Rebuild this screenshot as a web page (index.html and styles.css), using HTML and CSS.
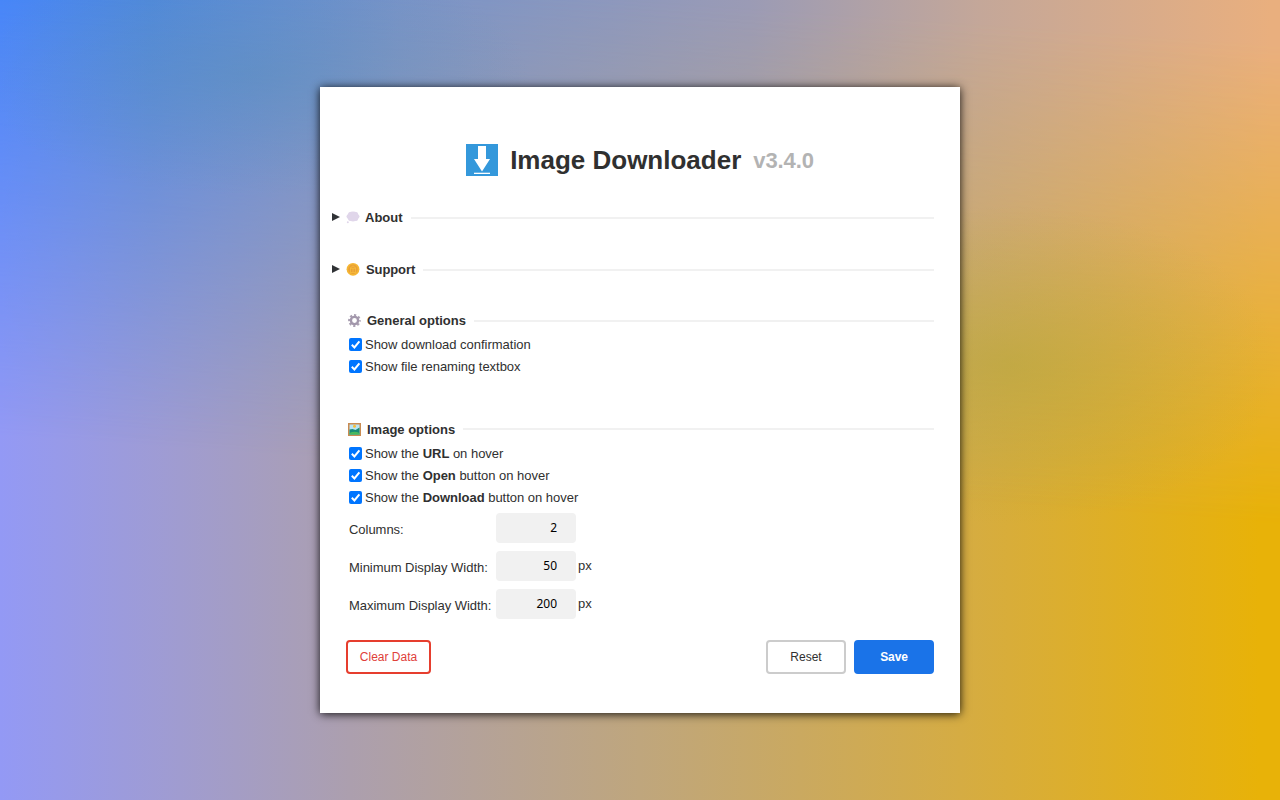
FILE: index.html
```html
<!DOCTYPE html>
<html lang="en">
<head>
<meta charset="utf-8">
<title>Image Downloader</title>
<link rel="stylesheet" href="styles.css">
</head>
<body>
<main class="card">
  <header class="header">
    <svg class="logo" viewBox="0 0 32 32"><rect width="32" height="32" fill="#3498db"/><path d="M12 2h8v13h4l-8 12.500l-8-12.500h4z" fill="#fff"/><path d="M8 28.700h16v1.300H8z" fill="#fff"/></svg>
    <h1 class="title">Image Downloader</h1>
    <span class="version">v3.4.0</span>
  </header>

  <section class="section about">
    <h2 class="heading collapsible">
      <svg class="marker" viewBox="0 0 8 8"><path d="M0 0l8 4l-8 4z"/></svg>
      <svg class="icon" viewBox="0 0 14 14"><g fill="#e0d6ea"><ellipse cx="7" cy="6.500" rx="5.800" ry="5"/><circle cx="2.500" cy="6.500" r="2"/><circle cx="11.500" cy="6.500" r="2"/><circle cx="4.200" cy="4" r="2"/><circle cx="10" cy="4" r="2"/><circle cx="4.200" cy="9" r="2"/><circle cx="10" cy="9" r="2"/><circle cx="1.800" cy="12.300" r="1"/></g></svg>
      <span>About</span>
    </h2>
  </section>

  <section class="section support">
    <h2 class="heading collapsible">
      <svg class="marker" viewBox="0 0 8 8"><path d="M0 0l8 4l-8 4z"/></svg>
      <svg class="icon coin" viewBox="0 0 14 14"><circle cx="7" cy="7.300" r="6.400" fill="#f5b634"/><circle cx="7" cy="7.300" r="4.700" fill="#e9a035"/><path d="M4 6.300l3-2.500l3 2.500zM4.500 6.300v4M7 6.300v4M9.500 6.300v4M4 10.500h6" stroke="#f6bc3c" stroke-width=".8" fill="none"/></svg>
      <span>Support</span>
    </h2>
  </section>

  <section class="section general">
    <h2 class="heading">
      <svg class="icon" viewBox="0 0 14 14"><circle cx="7.500" cy="7.500" r="5.400" fill="none" stroke="#aaa0b2" stroke-width="2" stroke-dasharray="2.200 2.041" stroke-dashoffset="1.100"/><circle cx="7.500" cy="7.500" r="3.600" fill="none" stroke="#a297ab" stroke-width="2.400"/></svg>
      <span>General options</span>
    </h2>
    <div class="checks">
      <label class="check"><span class="box"><svg viewBox="0 0 13 13"><path d="M2.800 6.800l2.600 2.600l5-6"/></svg></span><span>Show download confirmation</span></label>
      <label class="check"><span class="box"><svg viewBox="0 0 13 13"><path d="M2.800 6.800l2.600 2.600l5-6"/></svg></span><span>Show file renaming textbox</span></label>
    </div>
  </section>

  <section class="section images">
    <h2 class="heading">
      <svg class="icon" viewBox="0 0 14 14"><path d="M1 1h13v13H1z" fill="#c98b52"/><path d="M2.500 2.500h10v10h-10z" fill="#b9e4f4"/><circle cx="7.500" cy="4.300" r="1.500" fill="#f8bd35"/><path d="M2.500 7.500l3-.500l3 1l4-2.500v7h-10z" fill="#168b77"/><path d="M2.500 11q5-2.500 10 0v1.500h-10z" fill="#47b95e"/></svg>
      <span>Image options</span>
    </h2>
    <div class="checks">
      <label class="check"><span class="box"><svg viewBox="0 0 13 13"><path d="M2.800 6.800l2.600 2.600l5-6"/></svg></span><span>Show the <b>URL</b> on hover</span></label>
      <label class="check"><span class="box"><svg viewBox="0 0 13 13"><path d="M2.800 6.800l2.600 2.600l5-6"/></svg></span><span>Show the <b>Open</b> button on hover</span></label>
      <label class="check"><span class="box"><svg viewBox="0 0 13 13"><path d="M2.800 6.800l2.600 2.600l5-6"/></svg></span><span>Show the <b>Download</b> button on hover</span></label>
    </div>
    <div class="fields">
      <label class="field"><span class="field-name">Columns:</span><input class="number" value="2"></label>
      <label class="field"><span class="field-name">Minimum Display Width:</span><input class="number" value="50"><span class="unit">px</span></label>
      <label class="field"><span class="field-name">Maximum Display Width:</span><input class="number" value="200"><span class="unit">px</span></label>
    </div>
  </section>

  <footer class="actions">
    <button class="button danger">Clear Data</button>
    <button class="button neutral">Reset</button>
    <button class="button primary">Save</button>
  </footer>
</main>
</body>
</html>
```
FILE: styles.css
```css
* { box-sizing: border-box; }

body {
  margin: 0;
  height: 800px;
  overflow: hidden;
  display: flex;
  align-items: center;
  justify-content: center;
  font: 13px/22px "Liberation Sans", Arial, sans-serif;
  color: #303030;
  background: linear-gradient(90deg, #9399f5 0, #a09cd0 180px, #ac9fae 350px, #bfa67d 640px, #d5ac43 960px, #e8b208 1260px);
}

/* Cool-to-peach band that fades into the base gradient. */
body::before {
  content: "";
  position: absolute;
  inset: 0;
  background: linear-gradient(90deg, #4084f8 0, #4b88dc 150px, #7793c9 400px, #9b9bb5 750px, #c4a799 980px, #e9af7e 1270px);
  -webkit-mask-image: linear-gradient(184deg, #000 5%, rgba(0, 0, 0, .52) 32%, transparent 59%);
  mask-image: linear-gradient(184deg, #000 5%, rgba(0, 0, 0, .52) 32%, transparent 59%);
}

/* Green tints running down the diagonal. */
body::after {
  content: "";
  position: absolute;
  inset: 0;
  background:
    radial-gradient(ellipse 280px 120px at 250px 75px, rgba(80, 142, 180, .35), transparent),
    radial-gradient(ellipse 270px 160px at 1010px 365px, rgba(174, 166, 48, .45), transparent);
}

.card {
  position: relative;
  z-index: 1;
  width: 640px;
  height: 626px;
  padding: 57px 26px 0;
  background: #fff;
  box-shadow: 0 1px 9px rgba(0, 0, 0, .9);
}

.header {
  display: flex;
  align-items: center;
  justify-content: center;
  height: 32px;
}

.logo { width: 32px; height: 32px; margin-right: 12px; }
.title { margin: 0 12px 0 0; font-size: 26px; letter-spacing: 0; }
.version { padding-top: 1px; font-size: 22px; font-weight: bold; letter-spacing: -.1px; color: #b3b3b3; }

.about { margin-top: 31px; }
.support { margin-top: 32px; }
.general { margin-top: 31px; }
.images { margin-top: 41px; }

.heading {
  display: flex;
  align-items: center;
  height: 20px;
  margin: 0;
  padding-left: 1px;
  font-size: 13px;
  letter-spacing: 0;
}
.heading span { padding-top: 2px; }

.heading::after {
  content: "";
  flex: 1;
  height: 2px;
  margin-left: 8px;
  background: #f1f1f1;
}

.collapsible { margin-left: -14px; padding-left: 0; }
.collapsible::after { margin-top: 1px; }
.general .heading::after { margin-top: 2px; }
.support .heading { letter-spacing: -.1px; }
.marker { width: 8px; height: 8px; margin-right: 6px; fill: #303336; }
.icon { width: 14px; height: 14px; margin-right: 6px; }
.about .icon { margin-right: 5px; }

.checks { margin: 4px 0 0 3px; }
.check { display: flex; align-items: center; height: 22px; letter-spacing: -.02px; }
.box {
  width: 13px;
  height: 13px;
  margin: -1px 3px 0 0;
  border-radius: 2px;
  background: #0075ff;
}
.box svg { display: block; fill: none; stroke: #fff; stroke-width: 2; }

.fields { display: grid; gap: 8px; margin: 4px 0 0 3px; }
.field { display: flex; align-items: center; height: 30px; }
.field-name { width: 147px; padding-top: 3px; white-space: nowrap; letter-spacing: -.03px; }
.number {
  width: 80px;
  height: 30px;
  padding: 0 19px 1px 8px;
  border: 0;
  border-radius: 4px;
  background: #f1f1f1;
  color: #000;
  font: 12px "Noto Sans", sans-serif;
  text-align: right;
}
.unit { margin-left: 2px; }

.actions { display: flex; gap: 8px; margin-top: 21px; }
.button {
  width: 80px;
  height: 34px;
  padding: 0;
  border: 2px solid #ccc;
  border-radius: 4px;
  background: #fff;
  color: #303030;
  font: 12px "Liberation Sans", Arial, sans-serif;
}
.danger { width: 85px; margin-right: auto; border-color: #e63e2e; color: #e0403a; }
.primary { border-color: #1a73e8; background: #1a73e8; color: #fff; font-weight: bold; letter-spacing: -.1px; }
```
